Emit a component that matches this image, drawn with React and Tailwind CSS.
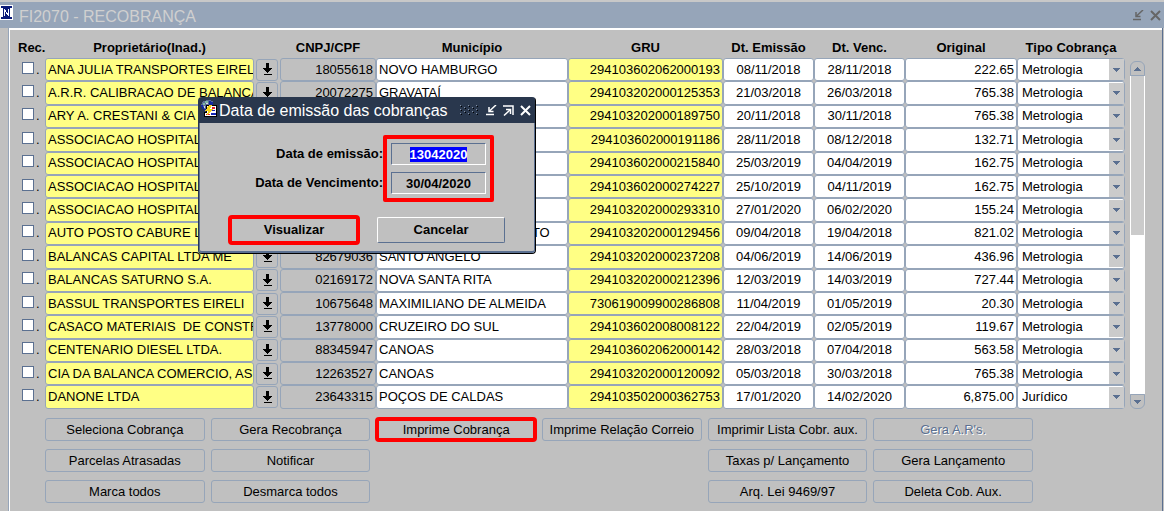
import { useEffect, useRef } from "react";

const rows = [
  ["ANA JULIA TRANSPORTES EIRELI", "18055618", "NOVO HAMBURGO", "294103602062000193", "08/11/2018", "28/11/2018", "222.65", "Metrologia"],
  ["A.R.R. CALIBRACAO DE BALANCAS", "20072275", "GRAVATAÍ", "294103202000125353", "21/03/2018", "26/03/2018", "765.38", "Metrologia"],
  ["ARY A. CRESTANI & CIA", "", "", "294103202000189750", "20/11/2018", "30/11/2018", "765.38", "Metrologia"],
  ["ASSOCIACAO HOSPITAL", "", "", "294103602000191186", "28/11/2018", "08/12/2018", "132.71", "Metrologia"],
  ["ASSOCIACAO HOSPITAL", "", "", "294103602000215840", "25/03/2019", "04/04/2019", "162.75", "Metrologia"],
  ["ASSOCIACAO HOSPITAL", "", "", "294103602000274227", "25/10/2019", "04/11/2019", "162.75", "Metrologia"],
  ["ASSOCIACAO HOSPITAL", "", "", "294103202000293310", "27/01/2020", "06/02/2020", "155.24", "Metrologia"],
  ["AUTO POSTO CABURE L", "", "SANTANA DO LIVRAMENTO", "294103202000129456", "09/04/2018", "19/04/2018", "821.02", "Metrologia"],
  ["BALANCAS CAPITAL LTDA ME", "82679036", "SANTO ANGELO", "294103202000237208", "04/06/2019", "14/06/2019", "436.96", "Metrologia"],
  ["BALANCAS SATURNO S.A.", "02169172", "NOVA SANTA RITA", "294103202000212396", "12/03/2019", "14/03/2019", "727.44", "Metrologia"],
  ["BASSUL TRANSPORTES EIRELI", "10675648", "MAXIMILIANO DE ALMEIDA", "730619009900286808", "11/04/2019", "01/05/2019", "20.30", "Metrologia"],
  ["CASACO MATERIAIS  DE CONSTRUCAO", "13778000", "CRUZEIRO DO SUL", "294103602008008122", "22/04/2019", "02/05/2019", "119.67", "Metrologia"],
  ["CENTENARIO DIESEL LTDA.", "88345947", "CANOAS", "294103602062000142", "28/03/2018", "07/04/2018", "563.58", "Metrologia"],
  ["CIA DA BALANCA COMERCIO, ASSIST", "12263527", "CANOAS", "294103202000120092", "05/03/2018", "30/03/2018", "765.38", "Metrologia"],
  ["DANONE LTDA", "23643315", "POÇOS DE CALDAS", "294103502000362753", "17/01/2020", "14/02/2020", "6,875.00", "Jurídico"],
];

const actions = [
  ["Seleciona Cobrança", "Gera Recobrança", "Imprime Cobrança", "Imprime Relação Correio", "Imprimir Lista Cobr. aux.", "Gera A.R's."],
  ["Parcelas Atrasadas", "Notificar", null, null, "Taxas p/ Lançamento", "Gera Lançamento"],
  ["Marca todos", "Desmarca todos", null, null, "Arq. Lei 9469/97", "Deleta Cob. Aux."],
];

const cell = "overflow-hidden whitespace-pre rounded-[3px] border border-[#96a5b9] p-0 px-0.5 leading-5";

function MinimizeIcon() {
  return (
    <svg width="11" height="11" viewBox="0 0 11 11" fill="none" stroke="currentColor">
      <path d="M0 9.5h8" strokeWidth="1.5" />
      <path d="M3 2v4.5h4.5" strokeWidth="1.5" />
      <path d="M10 0L3.5 6" strokeWidth="1.5" />
    </svg>
  );
}

function MaximizeIcon() {
  return (
    <svg width="11" height="11" viewBox="0 0 11 11" fill="none" stroke="currentColor">
      <path d="M0 1h10v9" strokeWidth="1.5" />
      <path d="M3 4.5h4.5V9" strokeWidth="1.5" />
      <path d="M7.5 4.5L1 10.5" strokeWidth="1.5" />
    </svg>
  );
}

function CloseIcon() {
  return (
    <svg width="11" height="11" viewBox="0 0 11 11" fill="none" stroke="currentColor" strokeWidth="2">
      <path d="M1 1l9 9M10 1l-9 9" />
    </svg>
  );
}

function Logo() {
  return (
    <svg width="13" height="15" viewBox="0 0 13 15" shapeRendering="crispEdges" aria-hidden="true">
      <path d="M0 0h13v15H0z" fill="#fff" />
      <path d="M1 1h11v2h-2v9h2v2H1v-2h2V3H1z" fill="#0a1a78" />
      <path d="M4 4h1v1h1v2h1v1h1V4h1v7H8v-1H7V9H6V7H5v4H4z" fill="#fff" />
    </svg>
  );
}

function DialogIcon() {
  return (
    <svg width="16" height="17" viewBox="0 0 16 17" shapeRendering="crispEdges" aria-hidden="true">
      <path d="M2 1h3V0h5v1h2v4H9v1H5v5H3V9H1V7H0V4h1V2h1z" fill="#5a6c96" />
      <path d="M0 5h2v2h1v2h2v2H3V9H1V7H0zM8 1h2v1h2v3H8z" fill="#1428a0" />
      <path d="M2 3h2v2H2zM4 1h3v2H4z" fill="#7fb8a6" />
      <path d="M5 3h2v1H5zM3 6h1v2H3z" fill="#d6dce6" />
      <path d="M5 5h11v12H3v-5h2z" fill="#000" />
      <path d="M6 6h9v10H4v-3h2z" fill="#fff" />
      <path d="M11 7h3v2h-3zM5 14h4v1H5z" fill="#e0202c" />
      <path d="M10 10h4v1h-4zM10 13h5v2h-5z" fill="#1426b4" />
      <path d="M8 5h3L9 9h3l-6 7 1-5H4z" fill="#f4d21c" />
    </svg>
  );
}

function DownloadIcon() {
  return (
    <svg width="9" height="13" viewBox="0 0 9 13" shapeRendering="crispEdges" aria-hidden="true">
      <path d="M3 0h3v5h3v1H8v1H7v1H6v1H5v1H4V9H3V8H2V7H1V6H0V5h3zM1 11h8v1H1z" fill="#000" />
    </svg>
  );
}

function Triangle({ up }) {
  return (
    <svg width="7" height="4" viewBox="0 0 7 4" shapeRendering="crispEdges" aria-hidden="true">
      <path d={up ? "M3 0h1v1h1v1h1v1h1v1H0V3h1V2h1V1h1z" : "M0 0h7v1H6v1H5v1H4v1H3V3H2V2H1V1H0z"} fill="#5b7091" />
    </svg>
  );
}

const dots = [0, 8, 16].flatMap((x) => [[x, 0], [x, 4], [x, 8]]).concat([[4, 2], [12, 2], [4, 6], [12, 6]]);

function Records() {
  return (
    <table className="h-[379px] w-full table-fixed border-separate border-spacing-0">
      <colgroup>
        <col className="w-[27px]" />
        <col />
        <col className="w-[26px]" />
        <col className="w-[96px]" />
        <col className="w-[192px]" />
        <col className="w-[155px]" />
        <col className="w-[91px]" />
        <col className="w-[91px]" />
        <col className="w-[112px]" />
        <col className="w-[108px]" />
      </colgroup>
      <thead>
        <tr className="h-7">
          <th className="p-0 pt-2">Rec.</th>
          <th className="p-0 pt-2">Proprietário(Inad.)</th>
          <th className="p-0" aria-label="Detalhe"></th>
          <th className="p-0 pt-2">CNPJ/CPF</th>
          <th className="p-0 pt-2">Município</th>
          <th className="p-0 pt-2">GRU</th>
          <th className="p-0 pt-2">Dt. Emissão</th>
          <th className="p-0 pt-2">Dt. Venc.</th>
          <th className="p-0 pt-2">Original</th>
          <th className="p-0 pt-2">Tipo Cobrança</th>
        </tr>
      </thead>
      <tbody>
        {rows.map(([owner, cnpj, city, gru, issued, due, amount, kind], i) => (
          <tr key={i}>
            <td className="p-0 pl-1">
              <label className="flex items-center gap-0.5">
                <input
                  type="checkbox"
                  aria-label={"Rec. " + owner}
                  className="mb-1 size-3 appearance-none border border-[#5b7091] bg-white checked:bg-[#5b7091]"
                />
                .
              </label>
            </td>
            <td className={cell + " bg-[#ffff84]"}>{owner}</td>
            <td className="p-0 px-0.5">
              <button aria-label={"Abrir " + owner} className="flex h-[22px] w-full items-center justify-center rounded-[3px] border border-[#96a5b9]">
                <DownloadIcon />
              </button>
            </td>
            <td className={cell + " text-right"}>{cnpj}</td>
            <td className={cell + " bg-white"}>{city}</td>
            <td className={cell + " bg-[#ffff84] text-right"}>{gru}</td>
            <td className={cell + " bg-white text-center"}>{issued}</td>
            <td className={cell + " bg-white text-center"}>{due}</td>
            <td className={cell + " bg-white text-right"}>{amount}</td>
            <td className="rounded-[3px] border border-[#96a5b9] bg-white p-0">
              <div className="relative">
                <select aria-label={"Tipo Cobrança " + owner} defaultValue={kind} className="block h-[21px] w-full appearance-none bg-transparent pl-1">
                  <option>Metrologia</option>
                  <option>Jurídico</option>
                </select>
                <span className="pointer-events-none absolute inset-y-0 right-0 flex w-[15px] items-center justify-center bg-[#cbcbcb]">
                  <Triangle />
                </span>
              </div>
            </td>
          </tr>
        ))}
      </tbody>
    </table>
  );
}

function ScrollBar() {
  return (
    <div className="mt-[31px] ml-[5px] flex w-[15px] flex-col">
      <button aria-label="Rolar para cima" className="flex h-[15px] items-center justify-center rounded-t-md border border-[#96a5b9]">
        <Triangle up />
      </button>
      <div className="flex-1 bg-white px-px">
        <div className="h-1/2 bg-[#cbcbcb]"></div>
      </div>
      <button aria-label="Rolar para baixo" className="flex h-[15px] items-center justify-center rounded-b-md border border-[#96a5b9]">
        <Triangle />
      </button>
    </div>
  );
}

function ActionButton({ label }) {
  if (!label) return <span></span>;
  const marked = label === "Imprime Cobrança";
  const disabled = label === "Gera A.R's.";
  return (
    <button
      disabled={disabled}
      className={
        "h-[23px] whitespace-nowrap rounded-[3px] border border-[#96a5b9] text-center leading-5 " +
        (marked ? "outline-4 outline-offset-[-3px] outline-[#ff0000] " : "") +
        (disabled ? "text-[#5b7091] [text-shadow:1px_1px_0_#fff]" : "text-black")
      }
    >
      {label}
    </button>
  );
}

function IssueDialog() {
  const issueDate = useRef(null);
  useEffect(() => {
    issueDate.current.focus();
    issueDate.current.select();
  }, []);
  const field =
    "h-[22px] w-[95px] border border-t-[#5b7091] border-l-[#5b7091] border-r-white border-b-white bg-[#c0c0c0] text-center font-bold outline-none selection:bg-[#0000ff] selection:text-white";
  const button =
    "h-[26px] w-32 rounded-[2px] border border-t-white border-l-white border-r-[#5b7091] border-b-[#5b7091] text-center font-bold leading-6";
  return (
    <div
      role="dialog"
      aria-labelledby="dialog-title"
      className="absolute top-[97px] left-[198px] w-[338px] rounded-[4px] border border-[#29374d] border-r-black border-b-black bg-[#c0c0c0]"
    >
      <header className="flex h-[25px] items-center bg-[#29374d] pr-1 text-white">
        <div className="-mt-1 pl-0.5"><DialogIcon /></div>
        <h2 id="dialog-title" className="pl-0.5 text-base leading-6 whitespace-nowrap">Data de emissão das cobranças</h2>
        <svg className="ml-auto" width="20" height="11" viewBox="0 0 20 11" shapeRendering="crispEdges" aria-hidden="true">
          {dots.map(([x, y]) => (
            <g key={x + "-" + y}>
              <path d={`M${x} ${y}h1v1h-1z`} fill="#8592a6" />
              <path d={`M${x + 1} ${y + 1}h1v1h-1z`} fill="#000" />
            </g>
          ))}
        </svg>
        <div className="ml-1.5 flex gap-1.5">
          <button aria-label="Minimizar diálogo"><MinimizeIcon /></button>
          <button aria-label="Maximizar diálogo"><MaximizeIcon /></button>
          <button aria-label="Fechar diálogo"><CloseIcon /></button>
        </div>
      </header>
      <div className="rounded-b-[3px] border-x border-b-2 border-[#5b7091] pt-3 pb-2">
        <div className="flex items-center">
          <div className="flex w-[183px] flex-col gap-[7px] text-right font-bold whitespace-nowrap">
            <label htmlFor="issue-date" className="leading-[22px]">Data de emissão:</label>
            <label htmlFor="due-date" className="leading-[22px]">Data de Vencimento:</label>
          </div>
          <div className="flex flex-col gap-[7px] rounded-[2px] border-4 border-[#ff0000] p-1">
            <input id="issue-date" ref={issueDate} className={field} defaultValue="13042020" />
            <input id="due-date" className={field} defaultValue="30/04/2020" />
          </div>
        </div>
        <div className="mt-[15px] flex gap-[19px] pl-[30px]">
          <button className={button + " outline-4 outline-offset-[-2px] outline-[#ff0000]"}>Visualizar</button>
          <button className={button}>Cancelar</button>
        </div>
      </div>
    </div>
  );
}

export default function App() {
  return (
    <div className="relative flex min-h-screen flex-col bg-[#c0c0c0] font-['Liberation_Sans',Arial,sans-serif] text-[13px] leading-5 text-black">
      <header className="flex h-7 items-center border-t-2 border-[#c8c8c8] bg-[#96a5b9] pr-[3px]">
        <div className="-mt-1.5"><Logo /></div>
        <h1 className="flex-1 pt-1 pl-1.5 text-base leading-6 text-[#d0d0d0]">FI2070 - RECOBRANÇA</h1>
        <div className="flex gap-1.5 text-[#666]">
          <button aria-label="Minimizar"><MinimizeIcon /></button>
          <button aria-label="Fechar"><CloseIcon /></button>
        </div>
      </header>
      <main className="mr-px ml-2 flex flex-1 flex-col border-r border-l border-r-[#5b7091] border-l-[#96a5b9]">
        <div className="flex-1 border-t-2 border-l border-white pr-[17px] pl-2">
          <div className="flex">
            <div className="min-w-0 flex-1"><Records /></div>
            <ScrollBar />
          </div>
          <div className="mt-[9px] mr-28 ml-[27px] flex flex-col gap-2">
            {actions.map((line, i) => (
              <div key={i} className="grid grid-cols-6 gap-1.5">
                {line.map((label, j) => (
                  <ActionButton key={j} label={label} />
                ))}
              </div>
            ))}
          </div>
        </div>
      </main>
      <IssueDialog />
    </div>
  );
}
